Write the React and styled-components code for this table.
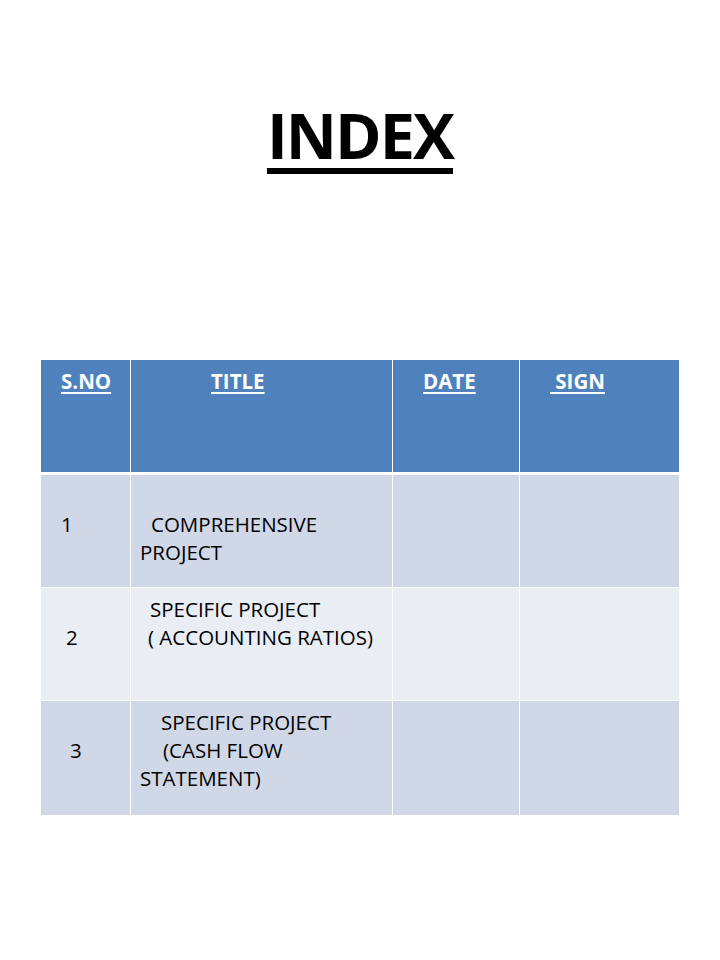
import React from "react";
import styled, { createGlobalStyle } from "styled-components";

const Global = createGlobalStyle`
  html, body { margin: 0; padding: 0; background: #ffffff; }
  body { font-family: "Open Sans", "Liberation Sans", sans-serif; color: #000; }
`;

const Page = styled.div`
  width: 720px;
  height: 960px;
  display: flex;
  flex-direction: column;
  align-items: center;
  box-sizing: border-box;
  padding-top: 87px;
`;

const Heading = styled.h1`
  margin: 0;
  font-family: "Open Sans", "Liberation Sans", sans-serif;
  font-weight: 700;
  font-size: 63px;
  line-height: 96px;
  letter-spacing: -2px;
  text-decoration: underline;
  text-decoration-thickness: 6px;
  text-underline-offset: 9px;
`;

const Table = styled.div`
  margin-top: 177px;
  width: 638px;
  display: grid;
  grid-template-columns: 89px 261px 126px 159px;
  grid-template-rows: 114px 112px 112px 114px;
  column-gap: 1px;
  row-gap: 1px;
  background: #ffffff;
`;

const Cell = styled.div`
  box-sizing: border-box;
  padding-top: 7px;
  background: ${(p) => (p.$head ? "#4f81bd" : p.$alt ? "#e9edf4" : "#d0d8e8")};
  border-bottom: ${(p) => (p.$head ? "2px solid #ffffff" : "none")};
  color: ${(p) => (p.$head ? "#ffffff" : "#000000")};
  font-weight: ${(p) => (p.$head ? 700 : 400)};
  font-size: 20.5px;
  line-height: 28px;
`;

const Line = styled.div`
  padding-left: ${(p) => p.$indent || 0}px;
  height: 28px;
  white-space: pre;
`;

const HeadLabel = styled.span`
  text-decoration: underline;
  text-decoration-thickness: 2px;
  text-underline-offset: 3px;
  white-space: pre;
`;

const rows = [
  {
    no: { lines: ["", "1"], indent: 20 },
    title: [
      ["", 0],
      ["COMPREHENSIVE", 20],
      ["PROJECT", 9],
    ],
  },
  {
    no: { lines: ["", "2"], indent: 25 },
    title: [
      ["SPECIFIC PROJECT", 19],
      ["( ACCOUNTING RATIOS)", 17],
    ],
  },
  {
    no: { lines: ["", "3"], indent: 29 },
    title: [
      ["SPECIFIC PROJECT", 30],
      ["(CASH FLOW", 32],
      ["STATEMENT)", 9],
    ],
  },
];

const headers = [
  ["S.NO", 20],
  ["TITLE", 80],
  ["DATE", 30],
  [" SIGN", 30],
];

export default function App() {
  return (
    <>
      <Global />
      <Page>
        <Heading>INDEX</Heading>
        <Table>
          {headers.map(([label, indent]) => (
            <Cell key={label} $head>
              <Line $indent={indent}>
                <HeadLabel>{label}</HeadLabel>
              </Line>
            </Cell>
          ))}
          {rows.map((r, i) => {
            const alt = i === 1;
            return (
              <React.Fragment key={i}>
                <Cell $alt={alt}>
                  {r.no.lines.map((l, j) => (
                    <Line key={j} $indent={r.no.indent}>
                      {l}
                    </Line>
                  ))}
                </Cell>
                <Cell $alt={alt}>
                  {r.title.map(([t, ind], j) => (
                    <Line key={j} $indent={ind}>
                      {t}
                    </Line>
                  ))}
                </Cell>
                <Cell $alt={alt} />
                <Cell $alt={alt} />
              </React.Fragment>
            );
          })}
        </Table>
      </Page>
    </>
  );
}
